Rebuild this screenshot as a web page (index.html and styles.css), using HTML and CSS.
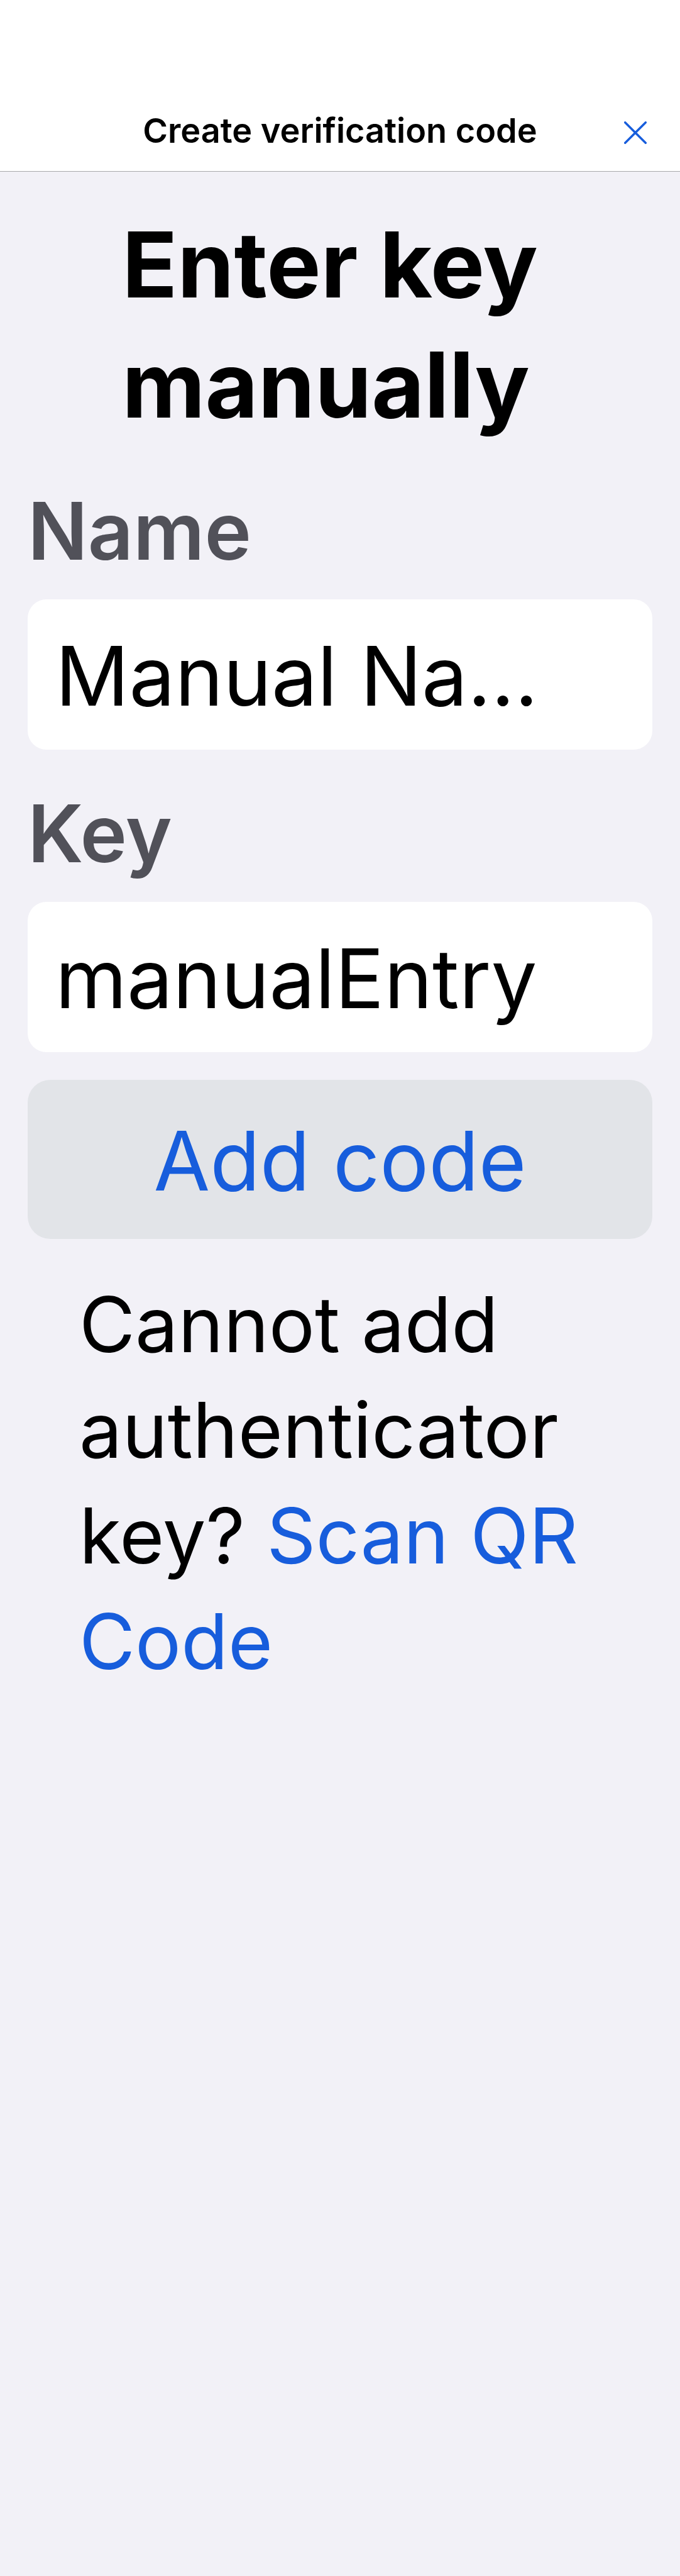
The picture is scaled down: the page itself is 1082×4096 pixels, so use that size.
FILE: index.html
```html
<!DOCTYPE html>
<html lang="en">
<head>
<meta charset="utf-8">
<meta name="viewport" content="width=device-width, initial-scale=1">
<title>Create verification code</title>
<link rel="stylesheet" href="styles.css">
</head>
<body>
<header class="navbar">
  <span class="navbar-title">Create verification code</span>
  <button class="close" type="button" aria-label="Close">
    <svg class="close-icon" viewBox="0 0 36 36" aria-hidden="true"><path d="M1.7 1.7 34.3 34.3M34.3 1.7 1.7 34.3"/></svg>
  </button>
</header>
<main class="content">
  <h1 class="heading">Enter key<br>manually</h1>
  <form class="form">
    <div class="field">
      <label class="label" for="name">Name</label>
      <input class="input" id="name" type="text" value="Manual Na…">
    </div>
    <div class="field">
      <label class="label" for="key">Key</label>
      <input class="input" id="key" type="text" value="manualEntry">
    </div>
    <button class="submit" type="button">Add code</button>
  </form>
  <p class="hint">Cannot add authenticator key? <a class="link" href="#scan">Scan QR Code</a></p>
</main>
</body>
</html>
```

FILE: styles.css
```css
* {
  box-sizing: border-box;
}

body {
  margin: 0;
  min-height: 100vh;
  background: #f2f1f7;
  color: #000;
  font-family: Inter, "Liberation Sans", sans-serif;
}

.navbar {
  display: grid;
  grid-template-columns: 1fr auto 1fr;
  align-items: center;
  padding: 144px 53px 0;
  height: 273px;
  background: #fff;
  border-bottom: 1px solid #a9a9ac;
}

.navbar-title {
  grid-column: 2;
  font-size: 54px;
  line-height: 68px;
  font-weight: 600;
}

.close {
  justify-self: end;
  display: flex;
  padding: 6px 0 0;
  border: 0;
  background: none;
}

.close-icon {
  width: 36px;
  height: 36px;
  fill: none;
  stroke: #175ddc;
  stroke-width: 3.4;
  stroke-linecap: round;
}

.content {
  padding: 52px 44px;
}

.heading {
  width: fit-content;
  margin: 0 auto 48px;
  padding-right: 32px;
  font-size: 145px;
  line-height: 191px;
  font-weight: 700;
}

.form {
  display: flex;
  flex-direction: column;
  gap: 44px;
}

.field {
  display: flex;
  flex-direction: column;
  gap: 20px;
}

.label {
  color: #515159;
  font-size: 126px;
  line-height: 178px;
  font-weight: 600;
}

.input {
  width: 100%;
  height: 239px;
  padding: 4px 44px 0;
  border: 0;
  border-radius: 30px;
  background: #fff;
  color: #000;
  font-family: inherit;
  font-size: 130px;
  outline: 0;
}

.submit {
  height: 253px;
  padding: 4px 0 0;
  border: 0;
  border-radius: 36px;
  background: #e2e4e8;
  color: #175ddc;
  font-family: inherit;
  font-size: 130px;
}

.hint {
  margin: 52px 44px 0 82px;
  font-size: 122px;
  line-height: 168px;
}

.link {
  color: #175ddc;
  text-decoration: none;
}
```
